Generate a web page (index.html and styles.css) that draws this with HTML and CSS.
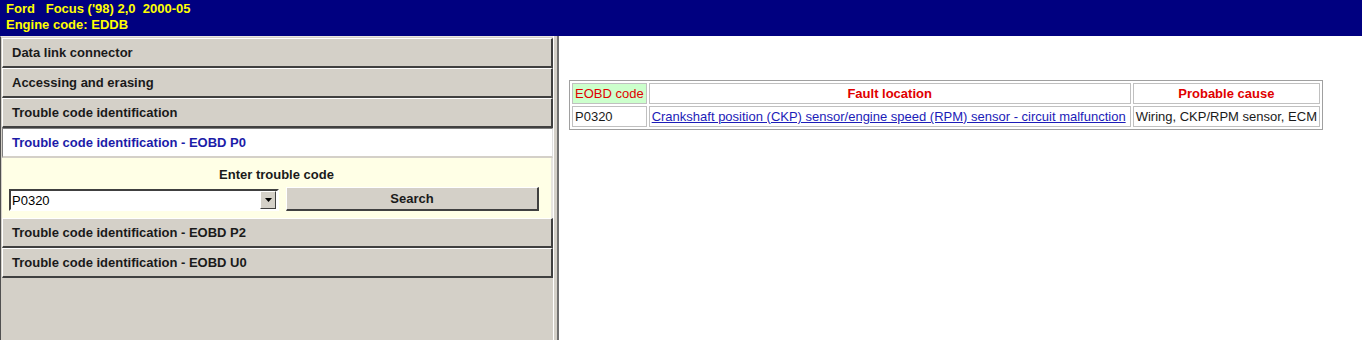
FILE: index.html
```html
<!DOCTYPE html>
<html lang="en">
<head>
  <meta charset="UTF-8">
  <title>Ford Focus EOBD</title>
  <link rel="stylesheet" href="styles.css">
</head>
<body>
  <div class="header">
    <div class="line">Ford   Focus ('98) 2,0  2000-05</div>
    <div class="line">Engine code: EDDB</div>
  </div>

  <div class="main">
    <div class="nav">
      <div class="item">Data link connector</div>
      <div class="item">Accessing and erasing</div>
      <div class="item">Trouble code identification</div>
      <div class="item active">Trouble code identification - EOBD P0</div>
      <div class="search-panel">
        <div class="search-title">Enter trouble code</div>
        <div class="search-row">
          <div class="combo">
            <span class="combo-value">P0320</span>
            <span class="combo-btn">
              <svg width="7" height="4" viewBox="0 0 7 4"><path d="M0 0h7L3.5 4z" fill="#000"/></svg>
            </span>
          </div>
          <button class="search-btn">Search</button>
        </div>
      </div>
      <div class="item">Trouble code identification - EOBD P2</div>
      <div class="item">Trouble code identification - EOBD U0</div>
    </div>

    <div class="splitter"></div>

    <div class="content">
      <table class="codes">
        <tr>
          <th class="sorted">EOBD code</th>
          <th class="wide">Fault location</th>
          <th>Probable cause</th>
        </tr>
        <tr>
          <td>P0320</td>
          <td><a href="#">Crankshaft position (CKP) sensor/engine speed (RPM) sensor - circuit malfunction</a></td>
          <td>Wiring, CKP/RPM sensor, ECM</td>
        </tr>
      </table>
    </div>
  </div>
</body>
</html>
```

FILE: styles.css
```css
body {
  margin: 0;
  font-family: 'Liberation Sans', Arial, sans-serif;
  font-size: 12px;
  background-color: #ffffff;
  height: 340px;
  overflow: hidden;
}

.header {
  background-color: #000080;
  color: #ffff00;
  font-weight: bold;
  font-size: 13px;
  height: 36px;
  padding: 1px 0 0 6px;
  box-sizing: border-box;
}

.line {
  white-space: pre;
  line-height: 16px;
}

.main {
  display: flex;
  height: 304px;
}

.nav {
  width: 553px;
  background-color: #d4d0c8;
  border-top: 1px solid #e8e6e0;
  border-left: 1px solid #505050;
  padding: 1px 0 0 1px;
  box-sizing: border-box;
}

.item {
  height: 30px;
  box-sizing: border-box;
  border-top: 1px solid #ffffff;
  border-left: 1px solid #ffffff;
  border-right: 2px solid #404040;
  border-bottom: 2px solid #404040;
  padding: 6px 0 0 9px;
  font-weight: bold;
  font-size: 13px;
  color: #1a1a1a;
}

.item.active {
  background-color: #ffffff;
  color: #1c1ca8;
  border-color: #808080 #e0e0e0 #e0e0e0 #808080;
  border-width: 1px;
  border-bottom: 2px solid #d4d0c8;
}

.search-panel {
  background-color: #ffffe6;
  height: 60px;
  border-right: 2px solid #e8e6e0;
  box-sizing: border-box;
  padding-top: 9px;
}

.search-title {
  text-align: center;
  font-weight: bold;
  font-size: 13px;
  color: #1a1a1a;
  height: 16px;
}

.search-row {
  display: flex;
  align-items: flex-end;
  margin-top: 4px;
  padding-left: 7px;
}

.combo {
  width: 270px;
  height: 22px;
  box-sizing: border-box;
  background: #ffffff;
  border: 2px solid;
  border-color: #404040 #ffffff #ffffff #404040;
  display: flex;
  align-items: center;
  font-size: 13px;
}

.combo-value {
  flex: 1;
  padding-left: 1px;
}

.combo-btn {
  width: 14px;
  height: 16px;
  background-color: #d4d0c8;
  border: 1px solid;
  border-color: #ffffff #404040 #404040 #ffffff;
  display: flex;
  align-items: center;
  justify-content: center;
  margin-right: 1px;
}

.search-btn {
  margin-left: 7px;
  width: 253px;
  height: 24px;
  background-color: #d4d0c8;
  border: 1px solid;
  border-color: #ffffff #404040 #404040 #ffffff;
  border-width: 1px 2px 2px 1px;
  font-family: 'Liberation Sans', Arial, sans-serif;
  font-weight: bold;
  font-size: 13px;
  color: #1a1a1a;
  padding: 0;
}

.splitter {
  width: 6px;
  background-color: #d4d0c8;
  border-left: 1px solid #ffffff;
  border-right: 2px solid #707070;
  box-sizing: border-box;
}

.content {
  flex: 1;
  padding: 44px 0 0 10px;
}

.codes {
  border: 1px solid #a0a0a0;
  border-spacing: 2px;
  font-size: 13px;
}

.codes th,
.codes td {
  border: 1px solid #c0c0c0;
  padding: 2px 2px;
  height: 14px;
}

.codes th {
  color: #e00000;
  font-weight: bold;
}

.codes th.sorted {
  background-color: #ccffcc;
  font-weight: normal;
  text-align: left;
}

.codes th.wide {
  width: 476px;
}

.codes td {
  color: #1a1a1a;
  white-space: nowrap;
}

.codes a {
  color: #1c1cb8;
}
```
